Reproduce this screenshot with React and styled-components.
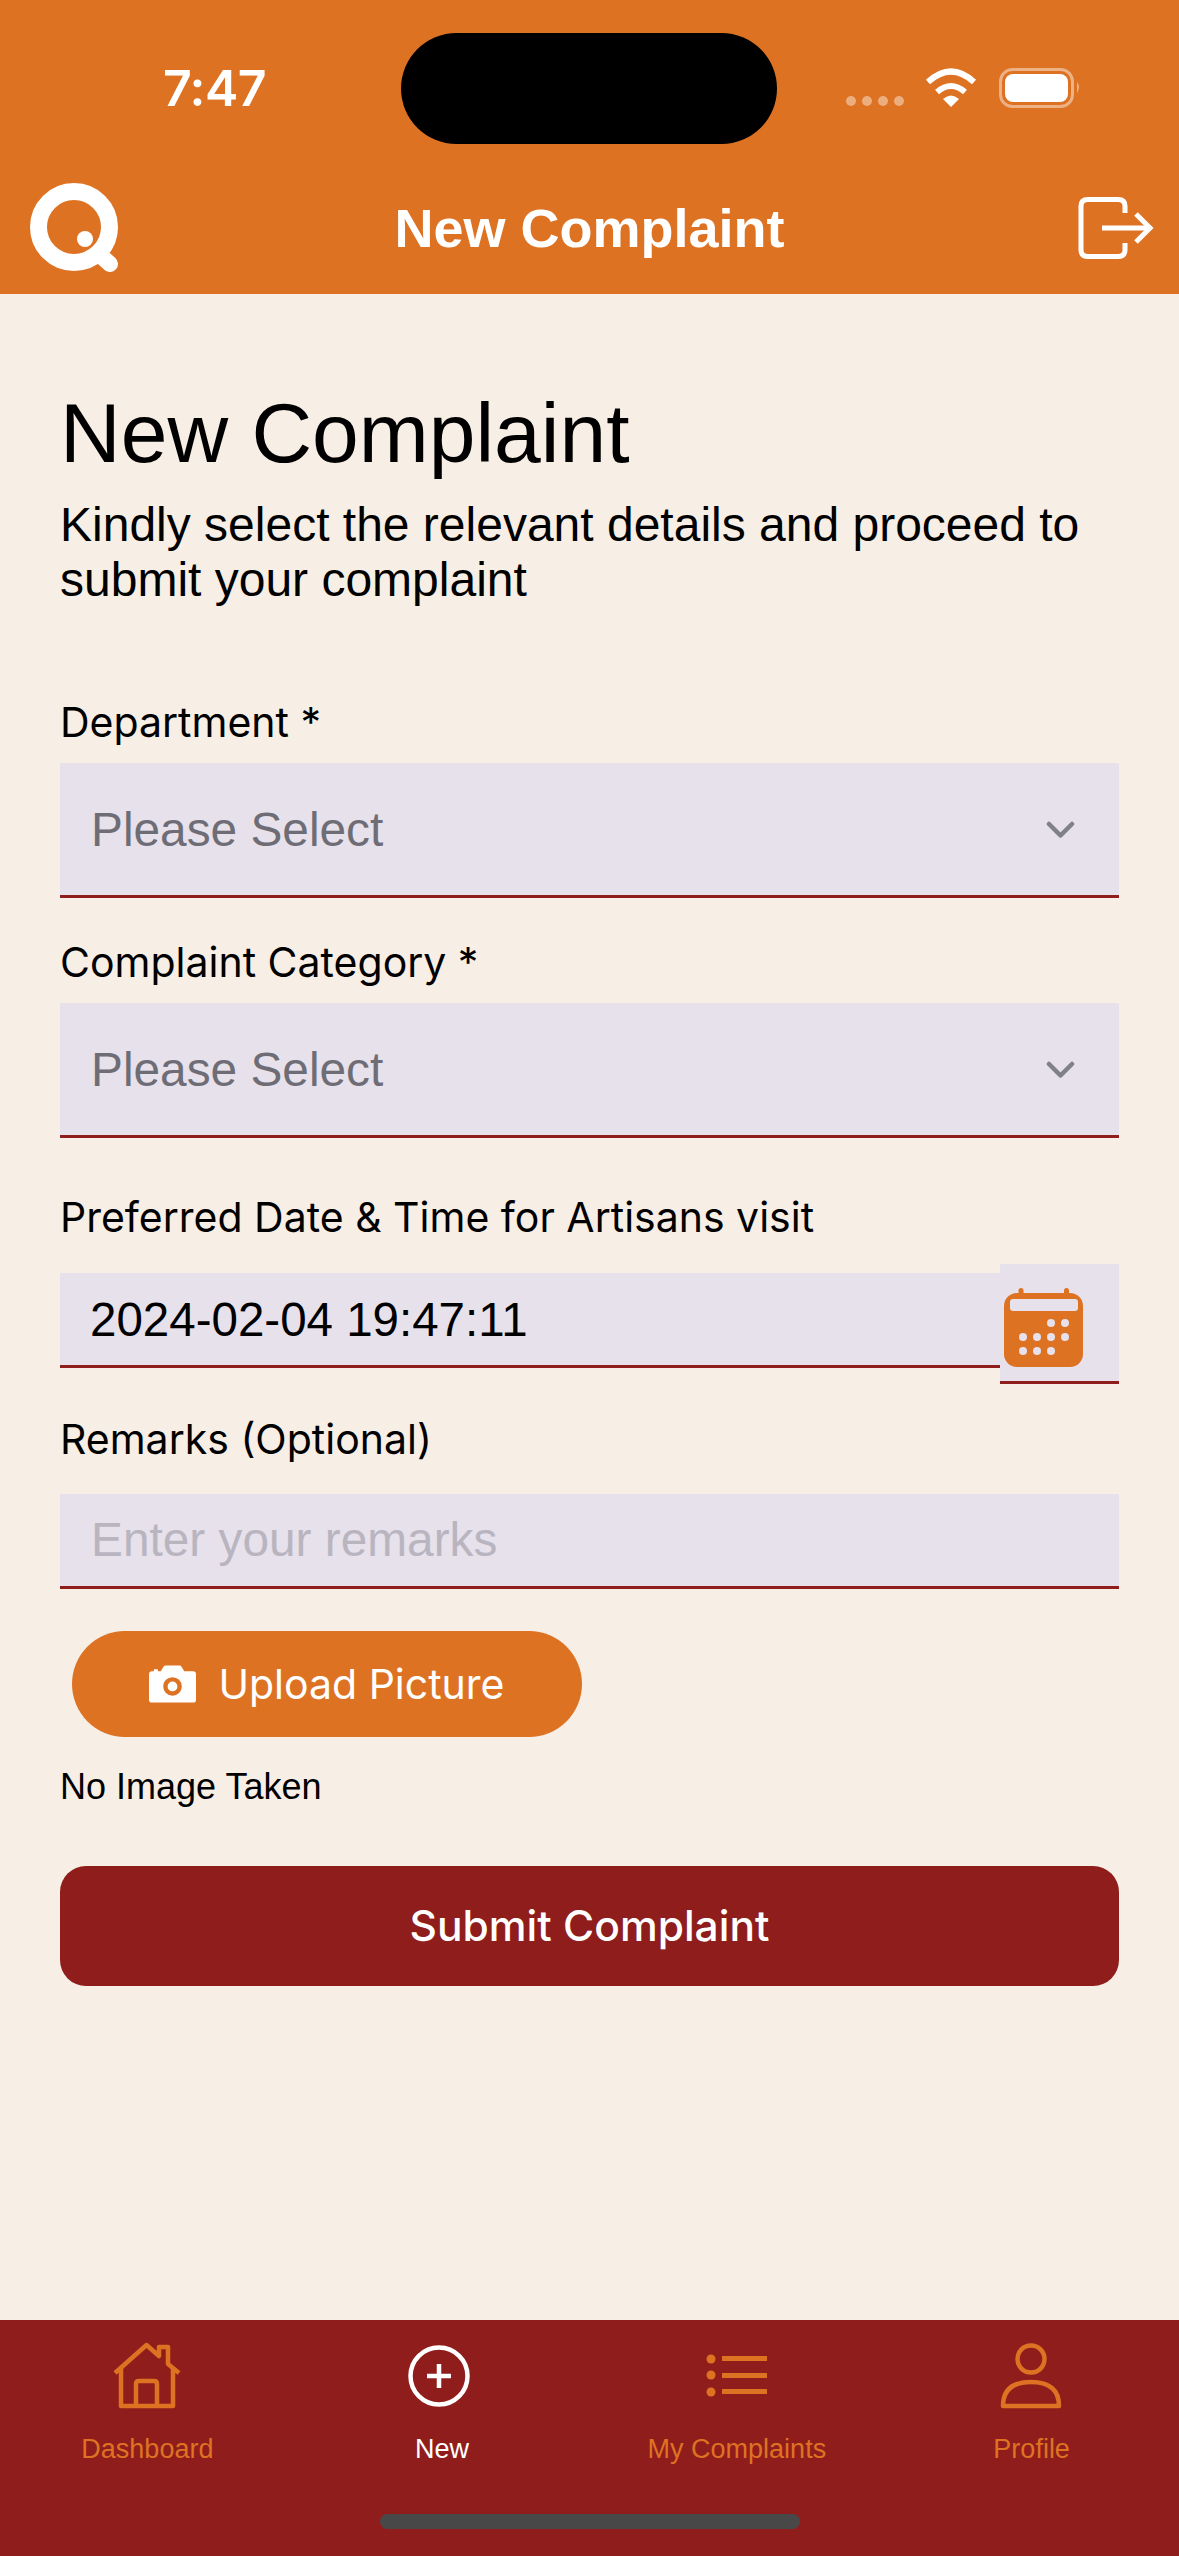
import React from "react";
import styled, { createGlobalStyle } from "styled-components";

const orange = "#DE7223";
const red = "#8F1D1B";
const field = "#E6E1EB";
const sans = `"Liberation Sans", Arial, sans-serif`;
const ui = `Inter, "Liberation Sans", sans-serif`;

const Global = createGlobalStyle`
  html, body { margin: 0; padding: 0; background: #F7EEE5; }
  * { box-sizing: border-box; }
`;
const Page = styled.div`
  width: 1179px; height: 2556px; display: flex; flex-direction: column;
  background: #F7EEE5; overflow: hidden; font-family: ${sans}; color: #000;
`;
const Header = styled.header`
  background: ${orange}; height: 294px; display: flex; flex-direction: column; position: relative;
`;
const Island = styled.div`
  position: absolute; left: 401px; top: 33px; width: 376px; height: 111px;
  border-radius: 56px; background: #000;
`;
const StatusBar = styled.div`
  height: 183px; display: flex; align-items: flex-start; position: relative;
`;
const Clock = styled.div`
  position: absolute; left: 163px; top: 60px; font: 600 50px/56px ${ui}; color: #fff; letter-spacing: -0.5px;
`;
const StatusIcons = styled.svg`
  position: absolute; left: 840px; top: 60px;
`;
const NavRow = styled.div`
  flex: 1; display: grid; grid-template-columns: 1fr auto 1fr; align-items: center; padding: 0 25px 19px;
`;
const LogoWrap = styled.div`
  display: flex; padding-left: 5px;
`;
const NavTitle = styled.h1`
  margin: 0 0 3px; font: 700 54px/62px ${sans}; color: #fff; text-align: center;
`;
const ExitWrap = styled.div`
  display: flex; justify-content: flex-end;
`;
const Main = styled.main`
  flex: 1; padding: 91px 60px 0; display: flex; flex-direction: column; align-items: stretch;
`;
const Title = styled.h2`
  margin: 0; font: 400 84px/96px ${sans};
`;
const Subtitle = styled.p`
  margin: 16px 0 0; font: 400 48px/55px ${sans};
`;
const Label = styled.label`
  display: block; margin-top: ${p => p.$top}px; font: 400 41px/50px ${ui};
`;
const Select = styled.div`
  margin-top: 16px; height: 135px; background: ${field}; border-bottom: 3px solid ${red};
  display: flex; align-items: center; justify-content: space-between; padding: 2px 44px 0 31px;
  font: 400 47.800px/56px ${sans}; color: #6E6D76;
`;
const DateRow = styled.div`
  margin-top: 22px; display: flex; align-items: flex-start;
`;
const DateInput = styled.div`
  flex: 1; margin-top: 9px; height: 95px; background: ${field}; border-bottom: 3px solid ${red};
  display: flex; align-items: center; padding: 2px 30px 0; font: 400 47.500px/56px ${sans}; color: #000;
`;
const DateButton = styled.div`
  width: 119px; height: 120px; background: ${field}; border-bottom: 3px solid ${red}; padding: 24px 0 0 4px;
`;
const TextInput = styled.div`
  margin-top: 30px; height: 95px; background: ${field}; border-bottom: 3px solid ${red};
  display: flex; align-items: center; padding: 0 31px; font: 400 47.800px/56px ${sans}; color: #B9B5C0;
`;
const UploadButton = styled.button`
  margin: 42px 0 0 12px; width: 510px; height: 106px; border: 0; border-radius: 53px; background: ${orange};
  color: #fff; display: flex; align-items: center; justify-content: center; gap: 22px;
  font: 400 41px/50px ${ui};
`;
const Hint = styled.div`
  margin-top: 30px; font: 400 36px/40px ${sans};
`;
const SubmitButton = styled.button`
  margin-top: 59px; height: 120px; border: 0; border-radius: 26px; background: ${red}; color: #fff;
  font: 500 42.500px/50px ${ui};
`;
const TabBar = styled.nav`
  height: 236px; background: ${red}; display: flex; flex-direction: column;
`;
const Tabs = styled.div`
  display: grid; grid-template-columns: repeat(4, 1fr); padding-top: 23px;
`;
const Tab = styled.div`
  display: flex; flex-direction: column; align-items: center; color: ${p => (p.$active ? "#fff" : orange)};
  font: 400 27px/32px ${sans};
`;
const TabIcon = styled.svg`
  display: block; margin-bottom: 24px; overflow: visible;
`;
const HomeBar = styled.div`
  width: 420px; height: 15px; border-radius: 8px; background: #484848; margin: 49px auto 0;
`;

const Chevron = () => (
  <svg width="29" height="18" viewBox="0 0 29 18" fill="none" stroke="#808087" strokeWidth="4.500" strokeLinecap="round" strokeLinejoin="round">
    <path d="M3 3 L14.500 14.500 L26 3" />
  </svg>
);

const Logo = () => (
  <svg width="92" height="92" viewBox="0 0 92 92">
    <circle cx="44" cy="44" r="35.500" fill="none" stroke="#fff" strokeWidth="17" />
    <circle cx="55" cy="56" r="8" fill="#fff" />
    <path d="M70 72 L80 81" stroke="#fff" strokeWidth="16" strokeLinecap="round" />
  </svg>
);

const Exit = () => (
  <svg width="76" height="64" viewBox="0 0 76 64" fill="none" stroke="#fff" strokeWidth="5" strokeLinejoin="round">
    <path d="M47 16 V9 Q47 2.500 40 2.500 H10 Q3 2.500 3 9 V53 Q3 59.500 10 59.500 H40 Q47 59.500 47 53 V46" />
    <path d="M24 31 H72" />
    <path d="M58 17 L72 31 L58 45" strokeLinejoin="miter" />
  </svg>
);

const Calendar = () => (
  <svg width="80" height="80" viewBox="0 0 80 80">
    <rect x="0" y="5" width="79" height="74" rx="13" fill={orange} />
    <rect x="14.500" y="0" width="5" height="10" rx="2.500" fill={orange} />
    <rect x="60" y="0" width="5" height="10" rx="2.500" fill={orange} />
    <rect x="6" y="11" width="68" height="12" rx="3" fill={field} />
    {[[47, 35], [61, 35], [19, 49], [33, 49], [47, 49], [61, 49], [19, 63], [33, 63], [47, 63]].map(([x, y]) => (
      <circle key={`${x}-${y}`} cx={x} cy={y} r="4" fill={field} />
    ))}
  </svg>
);

const Camera = () => (
  <svg width="47" height="38" viewBox="0 0 48 38">
    <path fillRule="evenodd" fill="#fff" d="M3 6 H5 V4 H9 V6 H12 L15 1 Q15.500 0 17 0 H31 Q32.500 0 33 1 L36 6 H45 Q48 6 48 9 V35 Q48 38 45 38 H3 Q0 38 0 35 V9 Q0 6 3 6 Z M24 12 A9.500 9.500 0 1 0 24 31 A9.500 9.500 0 1 0 24 12 Z M24 16.500 A5 5 0 1 1 24 26.500 A5 5 0 1 1 24 16.500 Z" />
  </svg>
);

const HomeIcon = () => (
  <TabIcon width="68" height="66" viewBox="0 0 68 66" fill="none" stroke={orange} strokeWidth="4.500" strokeLinejoin="round">
    <path d="M2 30 L33.500 2 L46 13 V4 H55 V21 L66 30" />
    <path d="M8 25 V63 H60 V25" />
    <path d="M23 63 V41 Q23 38 26 38 H41 Q44 38 44 41 V63" />
  </TabIcon>
);
const PlusIcon = () => (
  <TabIcon width="62" height="66" viewBox="3 0 62 66" fill="none" stroke="#fff">
    <circle cx="31" cy="33" r="28.500" strokeWidth="4.500" />
    <path d="M31 21 V45 M19 33 H43" strokeWidth="4.500" />
  </TabIcon>
);
const ListIcon = () => (
  <TabIcon width="62" height="66" viewBox="0 0 62 66" fill={orange}>
    <circle cx="5" cy="16" r="4.500" /><circle cx="5" cy="32" r="4.500" /><circle cx="5" cy="49" r="4.500" />
    <rect x="16" y="13" width="45" height="5" /><rect x="16" y="30" width="45" height="5" /><rect x="16" y="46" width="45" height="5" />
  </TabIcon>
);
const PersonIcon = () => (
  <TabIcon width="62" height="66" viewBox="1 0 62 66" fill="none" stroke={orange} strokeWidth="4.500" strokeLinejoin="round">
    <circle cx="31" cy="16" r="13.500" />
    <path d="M3 63 Q3 39 31 39 Q59 39 59 63 Z" />
  </TabIcon>
);

export default function App() {
  return (
    <Page>
      <Global />
      <Header>
        <StatusBar>
          <Clock>7:47</Clock>
          <Island />
          <StatusIcons width="250" height="60" viewBox="0 0 250 60">
            <g fill="#fff" fillOpacity="0.42">
              <circle cx="11" cy="41" r="5" /><circle cx="27" cy="41" r="5" /><circle cx="43" cy="41" r="5" /><circle cx="59" cy="41" r="5" />
            </g>
            <g fill="none" stroke="#fff" strokeWidth="6">
              <path d="M88 22 Q111 1 134 22" />
              <path d="M97 32 Q111 20 125 32" />
            </g>
            <path d="M103 39 Q111 32 119 39 L111 47 Z" fill="#fff" />
            <rect x="160.500" y="9.500" width="72" height="37" rx="12" fill="none" stroke="#fff" strokeOpacity="0.45" strokeWidth="3" />
            <rect x="165" y="14" width="63" height="28" rx="8" fill="#fff" />
            <path d="M237 22 Q241 27 237 33 Z" fill="#fff" fillOpacity="0.45" />
          </StatusIcons>
        </StatusBar>
        <NavRow>
          <LogoWrap><Logo /></LogoWrap>
          <NavTitle>New Complaint</NavTitle>
          <ExitWrap><Exit /></ExitWrap>
        </NavRow>
      </Header>
      <Main>
        <Title>New Complaint</Title>
        <Subtitle>Kindly select the relevant details and proceed to submit your complaint</Subtitle>
        <Label $top={90}>Department *</Label>
        <Select>Please Select<Chevron /></Select>
        <Label $top={39}>Complaint Category *</Label>
        <Select>Please Select<Chevron /></Select>
        <Label $top={54}>Preferred Date &amp; Time for Artisans visit</Label>
        <DateRow>
          <DateInput>2024-02-04 19:47:11</DateInput>
          <DateButton><Calendar /></DateButton>
        </DateRow>
        <Label $top={30}>Remarks (Optional)</Label>
        <TextInput>Enter your remarks</TextInput>
        <div>
          <UploadButton><Camera />Upload Picture</UploadButton>
        </div>
        <Hint>No Image Taken</Hint>
        <SubmitButton>Submit Complaint</SubmitButton>
      </Main>
      <TabBar>
        <Tabs>
          <Tab><HomeIcon />Dashboard</Tab>
          <Tab $active><PlusIcon />New</Tab>
          <Tab><ListIcon />My Complaints</Tab>
          <Tab><PersonIcon />Profile</Tab>
        </Tabs>
        <HomeBar />
      </TabBar>
    </Page>
  );
}
